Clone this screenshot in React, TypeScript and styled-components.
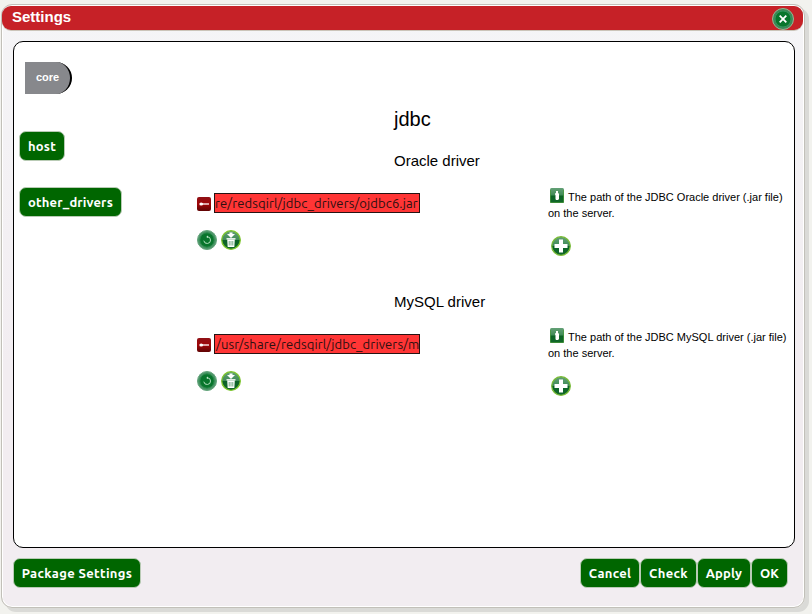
import React from 'react';
import styled, { createGlobalStyle } from 'styled-components';

const GlobalStyle = createGlobalStyle`
  * { box-sizing: border-box; }
  body {
    margin: 0;
    background: #f2f2ee;
    font-family: "Liberation Sans", Arial, sans-serif;
    color: #000;
    overflow: hidden;
  }
  svg { display: block; flex: none; }
  button { margin: 0; }
`;

const Page = styled.div`
  width: 812px;
  height: 614px;
  padding: 4px 0 0 1px;
`;

const Dialog = styled.div`
  width: 804px;
  height: 604px;
  display: flex;
  flex-direction: column;
  border: 1px solid #c2c0b9;
  border-radius: 11px;
  background: linear-gradient(#f5f5f7, #f2edf1 60%, #f2edf1);
  box-shadow: inset 0 0 0 1px #fff, inset 0 1px 0 1px #c9c5bd, 4px 4px 0 0 #dadad7;
`;

const TitleBar = styled.header`
  width: 801px;
  height: 24px;
  flex: none;
  display: flex;
  align-items: center;
  justify-content: space-between;
  padding: 0 9px 0 10px;
  margin-top: 1px;
  border-radius: 9px;
  background: #c62127;
  box-shadow: 0 1px 0 #cbc4b9;
  color: #fff;
`;

const Title = styled.h1`
  margin: 0 0 3px;
  font-size: 15px;
  line-height: 20px;
`;

const IconButton = styled.button`
  padding: 0;
  border: 0;
  background: none;
`;

const CloseButton = styled(IconButton)`
  margin-top: 2px;
`;

const Panel = styled.main`
  width: 782px;
  height: 507px;
  flex: none;
  margin: 11px 0 0 11px;
  border: 1px solid #000;
  border-radius: 10px;
  background: #fff;
  display: grid;
  grid-template-columns: 182px 1fr;
`;

const Nav = styled.nav`
  display: flex;
  flex-direction: column;
  align-items: flex-start;
  padding: 20px 0 0 5px;
`;

const Tab = styled.div`
  width: 47px;
  height: 32px;
  margin: 0 0 37px 6px;
  border-right: 2px solid #000;
  border-radius: 0 16px 16px 0;
  background: #87888c;
  color: #fff;
  font-size: 11px;
  font-weight: bold;
  line-height: 31px;
  text-align: center;
`;

const Button = styled.button<{ $width: number; $tracking?: number; $gap?: number }>`
  width: ${p => p.$width}px;
  height: 30px;
  margin-bottom: ${p => p.$gap ?? 0}px;
  padding: 0;
  border: 1px solid #b9cbb5;
  border-radius: 7px;
  background: #060;
  color: #fff;
  font: bold 13px/28px "Ubuntu", "Noto Sans", sans-serif;
  letter-spacing: ${p => p.$tracking ?? 0}px;
  white-space: nowrap;
`;

const Content = styled.div`
  padding-top: 64px;
`;

const GroupTitle = styled.h2`
  margin: 0 0 18px 198px;
  font-size: 20px;
  line-height: 26px;
  font-weight: normal;
`;

const Setting = styled.section`
  height: 141px;
`;

const SettingTitle = styled.h3`
  margin: 0 0 0 198px;
  font-size: 15px;
  line-height: 22px;
  font-weight: normal;
`;

const SettingBody = styled.div`
  display: grid;
  grid-template-columns: 352px 1fr;
`;

const FieldColumn = styled.div`
  padding: 21px 0 0 1px;
`;

const FieldRow = styled.div`
  display: flex;
  align-items: center;
  gap: 3px;
  > svg { margin-top: 1px; }
`;

const PathField = styled.div<{ $tracking: number; $indent: number }>`
  width: 206px;
  height: 20px;
  padding-left: ${p => p.$indent}px;
  overflow: hidden;
  border: 1px solid #261313;
  background: #ff3535;
  color: #2e1010;
  font: 13px/19px "Ubuntu", "Noto Sans", sans-serif;
  letter-spacing: ${p => p.$tracking}px;
  white-space: nowrap;
`;

const Actions = styled.div`
  display: flex;
  gap: 4px;
  margin-top: 17px;
`;

const HelpColumn = styled.div<{ $top: number }>`
  padding-top: ${p => p.$top}px;
`;

const Description = styled.p`
  margin: 0;
  font-size: 11px;
  line-height: 16px;
  white-space: nowrap;
`;

const FirstLine = styled.span`
  display: flex;
  align-items: center;
  gap: 4px;
  padding-left: 2px;
  svg { margin-top: -3px; }
`;

const AddSlot = styled.div`
  padding: 15px 0 0 3px;
`;

const Footer = styled.footer`
  display: flex;
  justify-content: space-between;
  padding: 10px 16px 0 11px;
`;

const ButtonGroup = styled.div`
  display: flex;
`;

const Gradients = () => (
  <svg width="0" height="0" style={{ position: 'absolute' }} aria-hidden="true">
    <defs>
      <linearGradient id="green" x2="0" y2="1">
        <stop offset="0" stopColor="#63a076" />
        <stop offset=".48" stopColor="#408b57" />
        <stop offset=".52" stopColor="#0b6226" />
        <stop offset="1" stopColor="#12692a" />
      </linearGradient>
      <linearGradient id="red" x2="0" y2="1">
        <stop offset="0" stopColor="#8f1116" />
        <stop offset=".5" stopColor="#a00508" />
        <stop offset="1" stopColor="#5f0404" />
      </linearGradient>
    </defs>
  </svg>
);

const CloseIcon = () => (
  <svg width="22" height="22" viewBox="0 0 22 22">
    <circle cx="11" cy="11" r="10.5" fill="#3f8558" stroke="#93b892" />
    <circle cx="11" cy="11" r="8" fill="#08752c" stroke="#2f965a" />
    <path d="M7.7 7.7l6.6 6.6M14.3 7.7l-6.6 6.6" stroke="#fff" strokeWidth="1.8" />
  </svg>
);

const KeyIcon = () => (
  <svg width="14" height="14" viewBox="0 0 14 14">
    <rect width="14" height="14" rx="2" fill="url(#red)" />
    <path d="M5 7h7" stroke="#fff" strokeWidth="1.3" />
    <ellipse cx="4.2" cy="7" rx="1.9" ry="1.6" fill="#fff" />
  </svg>
);

const RefreshIcon = () => (
  <svg width="20" height="20" viewBox="0 0 20 20">
    <circle cx="10" cy="10" r="9.5" fill="#4c9568" stroke="#65a57c" />
    <circle cx="10" cy="10" r="7.2" fill="#08752c" stroke="#2b8a4c" />
    <path d="M10.3 6.700a3.400 3.400 0 1 1-3.500 4" fill="none" stroke="#b0dfbd" strokeWidth="1" />
    <path d="M11 5.600v2.500l-1.800-1.200z" fill="#c5ecd0" />
  </svg>
);

const TrashIcon = () => (
  <svg width="20" height="20" viewBox="0 0 20 20">
    <circle cx="10" cy="10" r="9.3" fill="url(#green)" stroke="#7ec62b" strokeWidth="1.3" />
    <path d="M8.500 2.500h3V4h2.500L10 8 6 4h2.500z" fill="#fff" />
    <path d="M5.500 8.800h9" stroke="#fff" strokeWidth="1.300" />
    <path d="M6.200 9.400h7.600l-.5 7.600H6.700z" fill="#fff" />
    <path d="M8.200 11v4.500M10 11v4.500M11.800 11v4.500" stroke="#3b8751" strokeWidth=".7" />
  </svg>
);

const AddIcon = () => (
  <svg width="20" height="20" viewBox="0 0 20 20">
    <circle cx="10" cy="10" r="9.300" fill="url(#green)" stroke="#79bb35" strokeWidth="1.300" />
    <path d="M8 3.500h4V8h4.500v4H12v4.500H8V12H3.500V8H8z" fill="#fff" />
  </svg>
);

const InfoIcon = () => (
  <svg width="14" height="15" viewBox="0 0 14 15">
    <rect width="14" height="15" rx="1.500" fill="url(#green)" />
    <path d="M.5 2v12.500h13V2" fill="none" stroke="#4b9a3c" strokeWidth=".7" />
    <path d="M6 3h2v2l1 .8V11l-1 1H6l-.5-1V7L5 6.500V5.200h1z" fill="#fff" />
  </svg>
);

interface DriverProps {
  title: string;
  path: string;
  tracking: number;
  indent: number;
  help: string;
  helpTop: number;
}

const DriverSetting = ({ title, path, tracking, indent, help, helpTop }: DriverProps) => (
  <Setting>
    <SettingTitle>{title}</SettingTitle>
    <SettingBody>
      <FieldColumn>
        <FieldRow>
          <KeyIcon />
          <PathField $tracking={tracking} $indent={indent}>{path}</PathField>
        </FieldRow>
        <Actions>
          <IconButton aria-label="Reset"><RefreshIcon /></IconButton>
          <IconButton aria-label="Delete"><TrashIcon /></IconButton>
        </Actions>
      </FieldColumn>
      <HelpColumn $top={helpTop}>
        <Description>
          <FirstLine><InfoIcon />{help}</FirstLine>
          on the server.
        </Description>
        <AddSlot><IconButton aria-label="Add"><AddIcon /></IconButton></AddSlot>
      </HelpColumn>
    </SettingBody>
  </Setting>
);

export default function App() {
  return (
    <Page>
      <GlobalStyle />
      <Gradients />
      <Dialog>
        <TitleBar>
          <Title>Settings</Title>
          <CloseButton aria-label="Close"><CloseIcon /></CloseButton>
        </TitleBar>
        <Panel>
          <Nav>
            <Tab>core</Tab>
            <Button $width={46} $gap={26} $tracking={0.2}>host</Button>
            <Button $width={103} $tracking={0.17}>other_drivers</Button>
          </Nav>
          <Content>
            <GroupTitle>jdbc</GroupTitle>
            <DriverSetting
              title="Oracle driver"
              path="re/redsqirl/jdbc_drivers/ojdbc6.jar"
              tracking={0.12}
              indent={0}
              help="The path of the JDBC Oracle driver (.jar file)"
              helpTop={17}
            />
            <DriverSetting
              title="MySQL driver"
              path="/usr/share/redsqirl/jdbc_drivers/m"
              tracking={0.12}
              indent={1}
              help="The path of the JDBC MySQL driver (.jar file)"
              helpTop={16}
            />
          </Content>
        </Panel>
        <Footer>
          <Button $width={128} $tracking={0.35}>Package Settings</Button>
          <ButtonGroup>
            <Button $width={60} $tracking={0.35}>Cancel</Button>
            <Button $width={57} $tracking={0.35}>Check</Button>
            <Button $width={54} $tracking={0.2}>Apply</Button>
            <Button $width={37}>OK</Button>
          </ButtonGroup>
        </Footer>
      </Dialog>
    </Page>
  );
}
